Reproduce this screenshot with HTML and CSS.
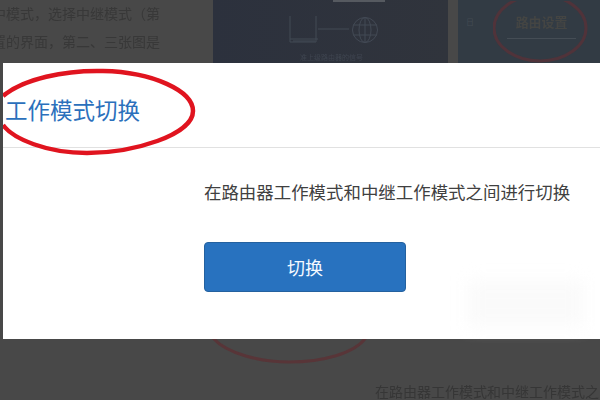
FILE: index.html
```html
<!DOCTYPE html>
<html lang="zh">
<head>
<meta charset="utf-8">
<title>工作模式切换</title>
<link rel="stylesheet" href="styles.css">
</head>
<body>
<div class="backdrop">
  <div class="top">
    <div class="article">
      <p>中模式，选择中继模式（第</p>
      <p>置的界面，第二、三张图是</p>
    </div>
    <div class="shot">
      <div class="shot-bar"></div>
      <svg class="diagram" viewBox="0 0 110 50" width="110" height="50" aria-hidden="true">
        <g fill="none" stroke="#434a55" stroke-width="1">
          <path d="M1 1V27H27V1M1 24H29M4 26H26"/>
          <path d="M29 14H60"/>
          <circle cx="76" cy="15" r="12.5"/>
          <ellipse cx="76" cy="15" rx="6" ry="12.5"/>
          <path d="M76 2.500V27.500M64 10H88M64 20H88"/>
        </g>
      </svg>
      <span class="caption">准上级路由器的信号</span>
    </div>
    <div class="side">
      <span class="side-glyph">日</span>
      <div class="side-item">路由设置</div>
      <svg class="side-ring" viewBox="0 0 110 70" width="110" height="70" aria-hidden="true">
        <ellipse cx="47" cy="27" rx="46" ry="33" fill="none" stroke="#50333a" stroke-width="3"/>
      </svg>
    </div>
  </div>
  <div class="bottom">
    <svg class="under-ring" viewBox="0 0 160 30" width="160" height="30" aria-hidden="true">
      <path d="M2 0C16 16 50 24 78 24C110 24 145 16 156 -2" fill="none" stroke="#583538" stroke-width="3"/>
    </svg>
    <p class="under-text">在路由器工作模式和中继工作模式之间</p>
  </div>
  <section class="modal">
    <header class="modal-head">
      <h1>工作模式切换</h1>
      <svg class="mark" viewBox="0 0 200 95" width="200" height="95" aria-hidden="true">
        <path d="M0 33C20 16 62 7 100 8C150 9 190 28 190 48C190 72 130 90 84 90C44 90 10 76 0 62" fill="none" stroke="#e0141f" stroke-width="4.500"/>
      </svg>
    </header>
    <div class="modal-body">
      <p>在路由器工作模式和中继工作模式之间进行切换</p>
      <button type="button">切换</button>
    </div>
    <div class="smudge"></div>
  </section>
</div>
</body>
</html>
```
FILE: styles.css
```css
* { box-sizing: border-box; }
html, body { margin: 0; padding: 0; }
body {
  width: 600px;
  height: 400px;
  overflow: hidden;
  font-family: "Noto Sans CJK SC", "Liberation Sans", sans-serif;
}
.backdrop {
  position: relative;
  width: 600px;
  height: 400px;
  background: #484848;
  overflow: hidden;
}
.top { display: flex; height: 63px; }
.article { width: 213px; padding-top: 4px; color: #383838; font-size: 14px; overflow: hidden; }
.article p { margin: 0 0 9px -8px; line-height: 19px; white-space: nowrap; filter: blur(.4px); }
.shot { position: relative; width: 235px; background: linear-gradient(90deg, #2c313d, #30343c); }
.shot-bar { position: absolute; left: 120px; top: 0; width: 52px; height: 2px; background: #565a60; }
.diagram { position: absolute; left: 76px; top: 15px; filter: blur(.4px); }
.caption { position: absolute; left: 87px; top: 53px; font-size: 7px; line-height: 9px; color: #3f4550; filter: blur(.5px); }
.side { position: relative; flex: 1; margin-left: 10px; background: #323b44; }
.side-glyph { position: absolute; left: 8px; top: 15px; font-size: 8px; line-height: 14px; color: #424a52; }
.side-item { position: absolute; left: 49px; top: 12px; width: 69px; height: 27px; border-bottom: 1px solid #454d55; text-align: center; font-size: 13px; line-height: 20px; font-weight: 700; letter-spacing: -.1px; color: #444543; filter: blur(.5px); }
.side-ring { position: absolute; left: 35px; top: 1px; }
.bottom { position: relative; height: 337px; }
.under-ring { position: absolute; left: 211px; top: 275px; }
.under-text { position: absolute; left: 375px; top: 318px; margin: 0; font-size: 14px; line-height: 20px; white-space: nowrap; color: #363636; filter: blur(.4px); }
.modal {
  position: absolute;
  left: 3px;
  top: 63px;
  width: 597px;
  height: 276px;
  background: #fff;
}
.modal-head {
  position: relative;
  height: 85px;
  padding: 29px 0 0 2px;
  border-bottom: 1px solid #e1e1e1;
}
.modal-head h1 { margin: 0; font-size: 22.500px; line-height: 34px; font-weight: 400; color: #2b70bc; white-space: nowrap; }
.mark { position: absolute; left: 0; top: 0; }
.modal-body { padding: 31px 0 0 201px; }
.modal-body p { margin: 0 0 37px; font-size: 17.450px; line-height: 26px; color: #404040; white-space: nowrap; }
.modal-body button {
  display: block;
  width: 202px;
  height: 50px;
  padding: 0;
  background: #2872bf;
  border: 1px solid #24619f;
  border-radius: 4px;
  color: #f4f9ff;
  font: inherit;
  font-size: 18px;
}
.smudge { position: absolute; left: 465px; top: 218px; width: 115px; height: 45px; background: #fafafa; filter: blur(8px); }
```
